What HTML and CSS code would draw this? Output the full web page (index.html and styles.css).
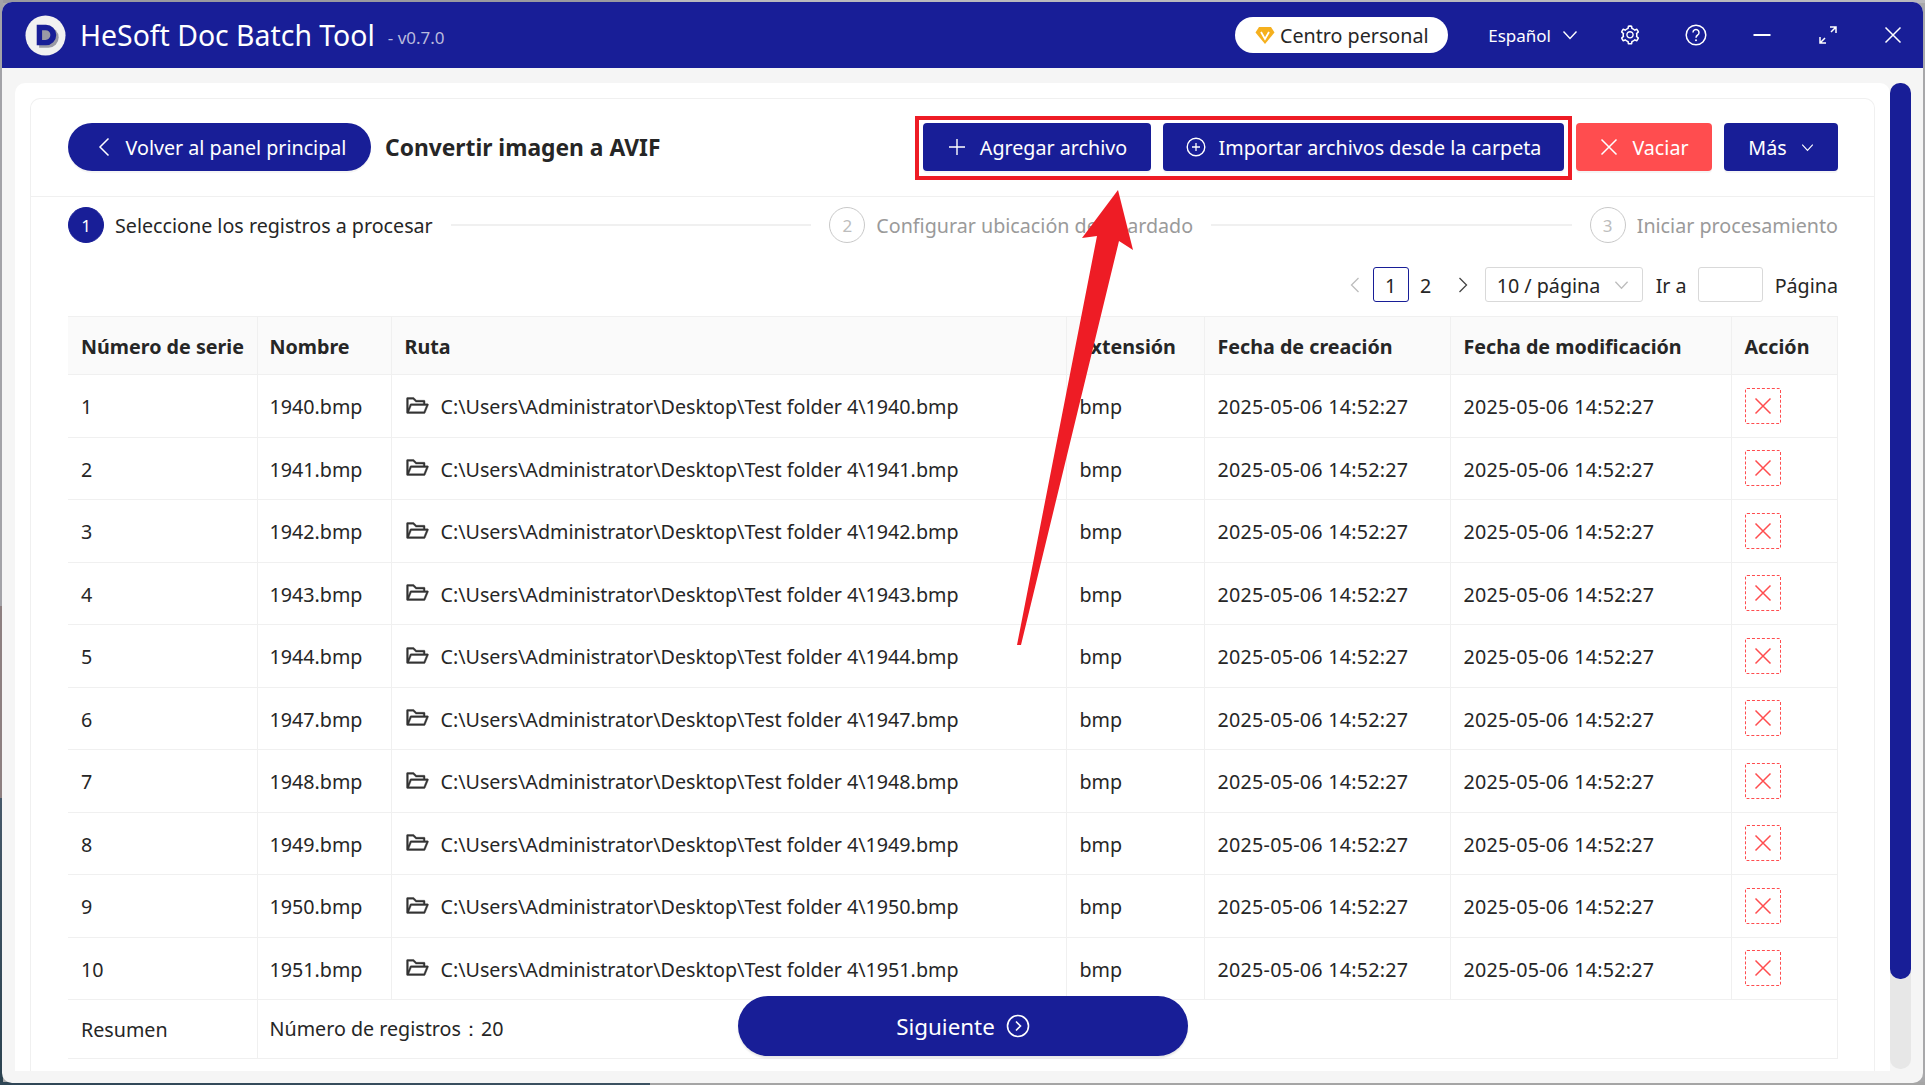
FILE: index.html
```html
<!DOCTYPE html>
<html lang="es">
<head>
<meta charset="utf-8">
<title>HeSoft Doc Batch Tool</title>
<link rel="stylesheet" href="styles.css">
</head>
<body>
<svg class="defs" width="0" height="0" aria-hidden="true">
  <symbol id="i-folder" viewBox="0 0 1024 1024"><path d="M928 444H820V330.4c0-17.7-14.3-32-32-32H473L355.7 186.2a8.15 8.15 0 0 0-5.5-2.2H96c-17.7 0-32 14.3-32 32v592c0 17.7 14.3 32 32 32h698c13 0 24.8-7.9 29.7-20l134-332c1.5-3.8 2.3-7.9 2.3-12 0-17.7-14.3-32-32-32zM136 256h188.5l119.6 114.4H748V444H238c-13 0-24.8 7.9-29.7 20L136 643.2V256zm635.3 512H159l103.3-256h612.4L771.3 768z"/></symbol>
  <symbol id="i-x" viewBox="0 0 20 20"><path d="M2.5 2.5l15 15M17.500 2.500l-15 15" fill="none" stroke="currentColor" stroke-width="1.500"/></symbol>
  <symbol id="i-down" viewBox="0 0 16 10"><path d="M1.500 1.500L8 8.500l6.500-7" fill="none" stroke="currentColor" stroke-width="1.400"/></symbol>
</svg>
<div class="window">
  <header class="titlebar">
    <svg class="logo" viewBox="0 0 42 42"><circle cx="21" cy="21" r="20.500" fill="#f1f1f1"/><path d="M13 11h9.500a10 10 0 0 1 0 21H13z" fill="#9a9aa5" transform="translate(1.500 1.500)"/><path d="M12 10h9.500a10.500 10.500 0 0 1 0 21H12zM17.500 15.500v10h3.500a5 5 0 0 0 0-10z" fill="#181e97" fill-rule="evenodd"/></svg>
    <span class="app-name">HeSoft Doc Batch Tool</span>
    <span class="app-version">- v0.7.0</span>
    <span class="spacer"></span>
    <a class="personal"><svg class="gem" viewBox="0 0 20 20"><path d="M4 2h12l3.500 5.500L10 19 .5 7.500z" fill="#f5b01e"/><path d="M6 7l4 7 4-7" fill="none" stroke="#fff" stroke-width="1.800"/></svg>Centro personal</a>
    <span class="lang">Español<svg class="lang-arrow"><use href="#i-down"/></svg></span>
    <svg class="tb-icon gear" viewBox="0 0 1024 1024"><path fill="#fff" d="M924.8 625.7l-65.5-56c3.1-19 4.7-38.4 4.7-57.8s-1.6-38.8-4.7-57.8l65.5-56a32.03 32.03 0 0 0 9.3-35.2l-.9-2.6a443.74 443.74 0 0 0-79.7-137.9l-1.8-2.1a32.12 32.12 0 0 0-35.1-9.5l-81.3 28.9c-30-24.6-63.5-44-99.7-57.6l-15.7-85a32.05 32.05 0 0 0-25.8-25.7l-2.7-.5c-52.1-9.4-106.9-9.4-159 0l-2.7.5a32.05 32.05 0 0 0-25.8 25.7l-15.8 85.4a351.86 351.86 0 0 0-99 57.4l-81.9-29.1a32 32 0 0 0-35.1 9.5l-1.8 2.1a446.02 446.02 0 0 0-79.7 137.9l-.9 2.6c-4.5 12.5-.8 26.5 9.3 35.2l66.3 56.6c-3.1 18.8-4.6 38-4.6 57.1 0 19.2 1.5 38.4 4.6 57.1L99 625.5a32.03 32.03 0 0 0-9.3 35.2l.9 2.6c18.1 50.4 44.9 96.9 79.7 137.9l1.8 2.1a32.12 32.12 0 0 0 35.1 9.5l81.9-29.1c29.8 24.5 63.1 43.9 99 57.4l15.8 85.4a32.05 32.05 0 0 0 25.8 25.7l2.7.5a449.4 449.4 0 0 0 159 0l2.7-.5a32.05 32.05 0 0 0 25.8-25.7l15.7-85a350 350 0 0 0 99.7-57.6l81.3 28.9a32 32 0 0 0 35.1-9.5l1.8-2.1c34.8-41.1 61.6-87.5 79.7-137.9l.9-2.6c4.5-12.3.8-26.3-9.3-35zM788.3 465.9c2.5 15.1 3.8 30.6 3.8 46.1s-1.3 31-3.8 46.1l-6.6 40.1 74.7 63.9a370.03 370.03 0 0 1-42.6 73.6L721 702.8l-31.4 25.8c-23.9 19.6-50.5 35-79.3 45.8l-38.1 14.3-17.9 97a377.5 377.5 0 0 1-85 0l-17.9-97.2-37.8-14.5c-28.5-10.8-55-26.2-78.7-45.7l-31.4-25.9-93.4 33.2c-17-22.9-31.2-47.6-42.6-73.6l75.5-64.5-6.5-40c-2.4-14.9-3.7-30.3-3.7-45.5 0-15.3 1.2-30.6 3.7-45.5l6.5-40-75.5-64.5c11.3-26.1 25.6-50.7 42.6-73.6l93.4 33.2 31.4-25.9c23.7-19.5 50.2-34.9 78.7-45.7l37.9-14.3 17.9-97.2c28.1-3.2 56.8-3.2 85 0l17.9 97 38.1 14.3c28.7 10.8 55.4 26.2 79.3 45.8l31.4 25.8 92.8-32.9c17 22.9 31.2 47.6 42.6 73.6L781.8 426l6.5 39.9zM512 326c-97.2 0-176 78.8-176 176s78.8 176 176 176 176-78.8 176-176-78.800-176-176-176zm79.2 255.2A111.6 111.6 0 0 1 512 614c-29.9 0-58-11.7-79.2-32.8A111.6 111.6 0 0 1 400 502c0-29.9 11.7-58 32.8-79.2C454 401.6 482.1 390 512 390c29.9 0 58 11.6 79.2 32.8A111.6 111.6 0 0 1 624 502c0 29.9-11.7 58-32.8 79.2z"/></svg>
    <svg class="tb-icon" viewBox="0 0 22 22"><circle cx="11" cy="11" r="9.800" fill="none" stroke="#fff" stroke-width="1.500"/><path d="M8 8.500a3 3 0 1 1 4.700 2.500c-1.100.7-1.700 1.300-1.700 2.800" fill="none" stroke="#fff" stroke-width="1.500"/><circle cx="11" cy="16.300" r="1" fill="#fff"/></svg>
    <svg class="tb-icon" viewBox="0 0 22 22"><path d="M2.500 11h17" stroke="#fff" stroke-width="1.800"/></svg>
    <svg class="tb-icon" viewBox="0 0 22 22"><path d="M13 3h6v6M19 3l-5 5M9 19H3v-6M3 19l5-5" fill="none" stroke="#fff" stroke-width="1.500"/></svg>
    <svg class="tb-icon close"><use href="#i-x"/></svg>
  </header>

  <div class="body">
    <main class="panel">
      <section class="card">
        <div class="toolbar">
          <a class="btn pill"><svg class="ic-back" viewBox="0 0 12 20"><path d="M10.500 1.500L2 10l8.500 8.500" fill="none" stroke="#fff" stroke-width="1.500"/></svg>Volver al panel principal</a>
          <h1 class="page-title">Convertir imagen a AVIF</h1>
          <span class="spacer"></span>
          <div class="highlight">
            <a class="btn add"><svg class="ic-btn" viewBox="0 0 20 20"><path d="M10 2v16M2 10h16" stroke="#fff" stroke-width="1.400"/></svg>Agregar archivo</a>
            <a class="btn import"><svg class="ic-btn" viewBox="0 0 20 20"><circle cx="10" cy="10" r="8.800" fill="none" stroke="#fff" stroke-width="1.400"/><path d="M10 6v8M6 10h8" stroke="#fff" stroke-width="1.300"/></svg>Importar archivos desde la carpeta</a>
          </div>
          <a class="btn danger"><svg class="ic-btn"><use href="#i-x"/></svg>Vaciar</a>
          <a class="btn more">Más<svg class="ic-more"><use href="#i-down"/></svg></a>
        </div>

        <div class="steps">
          <div class="step active"><span class="step-num">1</span><span>Seleccione los registros a procesar</span></div>
          <span class="step-line"></span>
          <div class="step"><span class="step-num">2</span><span>Configurar ubicación de guardado</span></div>
          <span class="step-line"></span>
          <div class="step"><span class="step-num">3</span><span>Iniciar procesamiento</span></div>
        </div>

        <nav class="pager">
          <svg class="pg-arrow off" viewBox="0 0 10 16"><path d="M8.500 1L1.500 8l7 7" fill="none" stroke="currentColor" stroke-width="1.300"/></svg>
          <span class="pg-num current">1</span>
          <span class="pg-num second">2</span>
          <svg class="pg-arrow nxt" viewBox="0 0 10 16"><path d="M1.500 1l7 7-7 7" fill="none" stroke="currentColor" stroke-width="1.300"/></svg>
          <span class="pg-select">10 / página<svg class="pg-down"><use href="#i-down"/></svg></span>
          <span class="pg-goto">Ir a</span>
          <span class="pg-input"></span>
          <span class="pg-unit">Página</span>
        </nav>

        <table class="grid">
          <colgroup><col class="c1"><col class="c2"><col class="c3"><col class="c4"><col class="c5"><col class="c6"><col class="c7"></colgroup>
          <thead>
            <tr><th>Número de serie</th><th>Nombre</th><th>Ruta</th><th>Extensión</th><th>Fecha de creación</th><th>Fecha de modificación</th><th>Acción</th></tr>
          </thead>
          <tbody>
            <tr><td>1</td><td>1940.bmp</td><td><span class="path"><svg class="folder"><use href="#i-folder"/></svg>C:\Users\Administrator\Desktop\Test folder 4\1940.bmp</span></td><td>bmp</td><td>2025-05-06 14:52:27</td><td>2025-05-06 14:52:27</td><td class="act"><span class="del"><svg><use href="#i-x"/></svg></span></td></tr>
            <tr><td>2</td><td>1941.bmp</td><td><span class="path"><svg class="folder"><use href="#i-folder"/></svg>C:\Users\Administrator\Desktop\Test folder 4\1941.bmp</span></td><td>bmp</td><td>2025-05-06 14:52:27</td><td>2025-05-06 14:52:27</td><td class="act"><span class="del"><svg><use href="#i-x"/></svg></span></td></tr>
            <tr><td>3</td><td>1942.bmp</td><td><span class="path"><svg class="folder"><use href="#i-folder"/></svg>C:\Users\Administrator\Desktop\Test folder 4\1942.bmp</span></td><td>bmp</td><td>2025-05-06 14:52:27</td><td>2025-05-06 14:52:27</td><td class="act"><span class="del"><svg><use href="#i-x"/></svg></span></td></tr>
            <tr><td>4</td><td>1943.bmp</td><td><span class="path"><svg class="folder"><use href="#i-folder"/></svg>C:\Users\Administrator\Desktop\Test folder 4\1943.bmp</span></td><td>bmp</td><td>2025-05-06 14:52:27</td><td>2025-05-06 14:52:27</td><td class="act"><span class="del"><svg><use href="#i-x"/></svg></span></td></tr>
            <tr><td>5</td><td>1944.bmp</td><td><span class="path"><svg class="folder"><use href="#i-folder"/></svg>C:\Users\Administrator\Desktop\Test folder 4\1944.bmp</span></td><td>bmp</td><td>2025-05-06 14:52:27</td><td>2025-05-06 14:52:27</td><td class="act"><span class="del"><svg><use href="#i-x"/></svg></span></td></tr>
            <tr><td>6</td><td>1947.bmp</td><td><span class="path"><svg class="folder"><use href="#i-folder"/></svg>C:\Users\Administrator\Desktop\Test folder 4\1947.bmp</span></td><td>bmp</td><td>2025-05-06 14:52:27</td><td>2025-05-06 14:52:27</td><td class="act"><span class="del"><svg><use href="#i-x"/></svg></span></td></tr>
            <tr><td>7</td><td>1948.bmp</td><td><span class="path"><svg class="folder"><use href="#i-folder"/></svg>C:\Users\Administrator\Desktop\Test folder 4\1948.bmp</span></td><td>bmp</td><td>2025-05-06 14:52:27</td><td>2025-05-06 14:52:27</td><td class="act"><span class="del"><svg><use href="#i-x"/></svg></span></td></tr>
            <tr><td>8</td><td>1949.bmp</td><td><span class="path"><svg class="folder"><use href="#i-folder"/></svg>C:\Users\Administrator\Desktop\Test folder 4\1949.bmp</span></td><td>bmp</td><td>2025-05-06 14:52:27</td><td>2025-05-06 14:52:27</td><td class="act"><span class="del"><svg><use href="#i-x"/></svg></span></td></tr>
            <tr><td>9</td><td>1950.bmp</td><td><span class="path"><svg class="folder"><use href="#i-folder"/></svg>C:\Users\Administrator\Desktop\Test folder 4\1950.bmp</span></td><td>bmp</td><td>2025-05-06 14:52:27</td><td>2025-05-06 14:52:27</td><td class="act"><span class="del"><svg><use href="#i-x"/></svg></span></td></tr>
            <tr><td>10</td><td>1951.bmp</td><td><span class="path"><svg class="folder"><use href="#i-folder"/></svg>C:\Users\Administrator\Desktop\Test folder 4\1951.bmp</span></td><td>bmp</td><td>2025-05-06 14:52:27</td><td>2025-05-06 14:52:27</td><td class="act"><span class="del"><svg><use href="#i-x"/></svg></span></td></tr>
          </tbody>
          <tfoot>
            <tr><td>Resumen</td><td colspan="6">Número de registros：20</td></tr>
          </tfoot>
        </table>
      </section>
    </main>
    <div class="scrollbar"><div class="thumb"></div></div>
  </div>

  <a class="next">Siguiente<svg viewBox="0 0 24 24"><circle cx="12" cy="12" r="10.500" fill="none" stroke="#fff" stroke-width="1.600"/><path d="M10 7.500l4.500 4.500-4.500 4.500" fill="none" stroke="#fff" stroke-width="1.600"/></svg></a>
</div>
<svg class="annotation" viewBox="0 0 1925 1085" aria-hidden="true"><path d="M1118 190L1133 250 1119 241 1021 645 1017 645 1097 236 1082 238z" fill="#ee1c25"/></svg>
</body>
</html>
```
FILE: styles.css
```css
* { box-sizing: border-box; }
html, body { height: 100%; }
body {
  margin: 0;
  height: 1085px;
  overflow: hidden;
  padding: 2px 2px 2px 2px;
  background:
    linear-gradient(90deg, #2f4656 0, #3d5262 650px, #a5a5a5 650px) bottom / 100% 3px no-repeat,
    linear-gradient(#a3a3a8 0, #a3a3a8 606px, #8d7f80 606px, #8d7f80 798px, #46596a 798px, #2b4250 100%) left / 3px 100% no-repeat,
    linear-gradient(90deg, #9a9aa0 0, #9a9aa0 650px, #b9b9bd 650px) top / 100% 3px no-repeat,
    #a8a8aa;
  font-family: "Noto Sans", "Open Sans", sans-serif;
  font-size: 19.7px;
  color: #262626;
  position: relative;
}
.defs { position: absolute; }
.spacer { flex: 1; }

.window {
  position: relative;
  height: 1081px;
  background: #f5f5f5;
  border-radius: 10px;
  overflow: hidden;
  display: flex;
  flex-direction: column;
}

.titlebar {
  height: 66px;
  flex: none;
  background: #181e97;
  color: #fff;
  display: flex;
  align-items: center;
  padding: 0 20px 0 23px;
}
.logo { width: 41px; height: 41px; margin-right: 14px; }
.app-name { font-size: 28.4px; }
.app-version { font-size: 17px; color: #b9bbdd; margin-left: 13px; margin-top: 4px; }
.personal {
  height: 36px;
  width: 213px;
  border-radius: 18px;
  background: #fff;
  color: #262626;
  display: flex;
  align-items: center;
  justify-content: center;
  gap: 5px;
}
.gem { width: 20px; height: 20px; }
.lang { font-size: 17px; margin-left: 40px; display: flex; align-items: center; gap: 11px; }
.lang-arrow { width: 16px; height: 10px; }
.tb-icon { width: 22px; height: 22px; margin-left: 44px; color: #fff; }
.gear { margin-left: 41px; }
.close { width: 20px; height: 20px; }

.body { flex: 1; display: flex; min-height: 0; padding: 15px 12px 12px 13px; }
.panel {
  flex: 1;
  background: #fff;
  border-radius: 10px 10px 0 0;
  overflow: hidden;
  padding: 15px 15px 0 15px;
}
.card {
  height: 100%;
  border: 1px solid #f0f0f0;
  border-bottom: 0;
  border-radius: 10px 10px 0 0;
  padding: 24px 36px 0 37px;
}
.scrollbar {
  width: 21px;
  height: 986px;
  border-radius: 10px;
  background: #e7e7e7;
  flex: none;
}
.thumb { height: 896px; background: #181e97; border-radius: 10px; }

.toolbar { display: flex; align-items: center; height: 48px; gap: 12px; margin-bottom: 25px; }
.btn {
  height: 48px;
  display: flex;
  align-items: center;
  justify-content: center;
  gap: 13px;
  color: #fff;
  background: #181e97;
  border-radius: 4px;
  box-shadow: 0 2px 0 rgba(0, 0, 0, .04);
}
.pill { border-radius: 24px; width: 303px; gap: 16px; padding-left: 5px; }
.ic-back { width: 12px; height: 20px; }
.page-title { font-size: 22.8px; font-weight: 700; margin: 0 0 0 2px; }
.highlight { position: relative; display: flex; gap: 12px; }
.highlight::after {
  content: "";
  position: absolute;
  inset: -7px -8px -9px -8px;
  border: 4px solid #ee1c25;
  pointer-events: none;
}
.add { width: 228px; }
.import { width: 401px; }
.ic-btn { width: 20px; height: 20px; color: #fff; }
.danger { background: #ff4d4f; width: 136px; }
.more { width: 114px; gap: 14px; }
.ic-more { width: 13px; height: 9px; }

.steps {
  margin: 0 -36px 0 -37px;
  padding: 10px 36px 0 37px;
  border-top: 1px solid #f0f0f0;
  box-sizing: content-box;
  display: flex;
  align-items: center;
  height: 36px;
}
.step { display: flex; align-items: center; gap: 11px; color: #9a9a9a; white-space: nowrap; }
.step.active { color: #262626; }
.step-num {
  width: 36px; height: 36px;
  border-radius: 50%;
  border: 1px solid #c9c9c9;
  color: #bdbdbd;
  display: flex; align-items: center; justify-content: center;
  font-size: 17px;
}
.active .step-num { background: #181e97; border-color: #181e97; color: #fff; }
.step > span:last-child { padding-top: 1px; }
.step-line { flex: 1; height: 2px; background: #f0f0f0; margin: 0 18px; }

.pager { margin-top: 24px; height: 35px; display: flex; align-items: center; justify-content: flex-end; gap: 13px; }
.pager > span { padding-top: 1px; }
.pg-arrow { width: 10px; height: 16px; color: #444; flex: none; }
.pg-arrow.off { color: #bdbdbd; }
.pg-arrow.nxt { margin: 0 4px 0 1px; }
.pg-num { width: 36px; height: 35px; display: flex; align-items: center; justify-content: center; }
.pg-num.second { margin-left: -14px; }
.pg-num.current { border: 1px solid #181e97; border-radius: 3px; }
.pg-select { width: 158px; height: 35px; border: 1px solid #d9d9d9; border-radius: 3px; display: flex; align-items: center; justify-content: space-between; padding: 0 13px 0 11px; }
.pg-down { width: 15px; height: 10px; color: #bdbdbd; }
.pg-goto { margin-right: -2px; }
.pg-input { width: 65px; height: 35px; border: 1px solid #d9d9d9; border-radius: 3px; }
.pg-unit { margin-left: -1px; }

.grid { margin-top: 14px; width: 1769px; table-layout: fixed; border-collapse: collapse; }
.c1 { width: 189px; } .c2 { width: 134px; } .c3 { width: 675px; } .c4 { width: 138px; }
.c5 { width: 246px; } .c6 { width: 281px; } .c7 { width: 106px; }
.grid th, .grid td { border: 1px solid #f0f0f0; padding: 2px 12px 0 13px; text-align: left; white-space: nowrap; overflow: hidden; }
.grid tr > :nth-child(2) { padding-left: 12px; }
.grid tbody td:nth-child(5), .grid tbody td:nth-child(6) { letter-spacing: .25px; }
.grid td.act { padding: 0 12px 0 13px; }
.grid tr { height: 62.5px; }
.grid thead tr { height: 58px; }
.grid th { background: #fafafa; font-weight: 700; border-left-color: #f4f4f4; }
.grid tfoot tr { height: 59px; }
.grid tfoot td { padding-top: 0; }
.grid tr > :first-child { border-left: 0; }
.path { display: flex; align-items: center; gap: 11px; }
.folder { width: 25px; height: 25px; fill: #333; stroke: #333; stroke-width: 16; margin-top: -3px; flex: none; }
.del {
  width: 36px; height: 36px;
  border: 1px dashed #ff4d4f;
  border-radius: 2px;
  display: flex; align-items: center; justify-content: center;
  color: #ff4d4f;
}
.del svg { width: 20px; height: 20px; }

.next {
  position: absolute;
  left: 736px;
  top: 994px;
  width: 450px;
  height: 60px;
  border-radius: 30px;
  background: #181e97;
  color: #fff;
  font-size: 22.4px;
  display: flex;
  align-items: center;
  justify-content: center;
  gap: 11px;
  box-shadow: 0 2px 2px rgba(0, 0, 0, .1);
}
.next svg { width: 24px; height: 24px; }
.annotation { position: absolute; left: 0; top: 0; width: 1925px; height: 1085px; pointer-events: none; }
```
